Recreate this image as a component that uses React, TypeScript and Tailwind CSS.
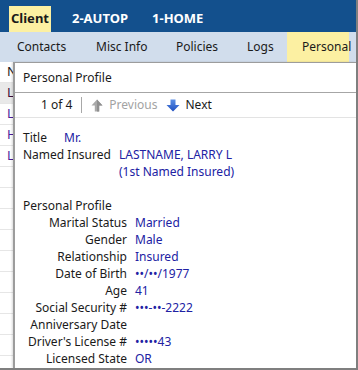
const ArrowUp = () => (
  <svg width="12" height="13" viewBox="0 0 12 13">
    <path d="M6 0.5 L11.5 6.5 H8.2 V12.5 H3.8 V6.5 H0.5 Z" fill="#a9a9a9" />
    <path d="M6 0.5 L11.5 6.5 H8.2 V12.5 H6 Z" fill="#8f8f8f" />
  </svg>
);

const ArrowDown = () => (
  <svg width="14" height="13" viewBox="0 0 14 13">
    <defs>
      <linearGradient id="dn" x1="0" y1="0" x2="0" y2="1">
        <stop offset="0" stopColor="#5b8fe6" />
        <stop offset="1" stopColor="#1f4fc0" />
      </linearGradient>
    </defs>
    <path d="M4.5 0.5 H9.5 V6 H13.5 L7 12.5 L0.5 6 H4.5 Z" fill="url(#dn)" />
  </svg>
);

const fields: [string, string][] = [
  ['Marital Status', 'Married'],
  ['Gender', 'Male'],
  ['Relationship', 'Insured'],
  ['Date of Birth', '••/••/1977'],
  ['Age', '41'],
  ['Social Security #', '•••-••-2222'],
  ['Anniversary Date', ''],
  ["Driver's License #", '•••••43'],
  ['Licensed State', 'OR'],
];

const listRows = ['L', 'L', 'H', 'L', '', '', '', '', '', '', '', '', ''];

export default function App() {
  return (
    <div className="relative w-[358px] h-[370px] overflow-hidden bg-white border-r-2 border-b-2 border-[#7f7f7f] font-['Noto_Sans',sans-serif] text-[12px] text-[#1a1a1a]">
      {/* Top tab bar */}
      <div className="flex h-[32px] items-end bg-[#13508d] pl-[9px] font-bold text-[13px] text-white">
        <div className="flex h-[26px] w-[42px] items-center justify-center bg-[#fcf0a2] text-[#1a1a1a]">
          Client
        </div>
        <div className="flex h-[26px] items-center pl-[21px]">2-AUTOP</div>
        <div className="flex h-[26px] items-center pl-[24px]">1-HOME</div>
      </div>

      {/* Sub tabs */}
      <div className="flex h-[30px] bg-[#d1ddec] pl-[8px] text-[12px]">
        <div className="flex w-[80px] items-center pl-[9px]">Contacts</div>
        <div className="flex w-[80px] items-center pl-[8px]">Misc Info</div>
        <div className="flex w-[71px] items-center pl-[8px]">Policies</div>
        <div className="flex w-[48px] items-center pl-[8px]">Logs</div>
        <div className="flex w-[62px] items-center pl-[15px] bg-[#fcf0a2]">Personal</div>
      </div>

      {/* List behind the popup */}
      <div className="flex flex-col text-[13px]">
        <div className="flex h-[21px] items-center border-b border-[#e6e6e6] pl-[7px] text-[#1a1a1a]">N</div>
        {listRows.map((r, i) => (
          <div
            key={i}
            className={`flex h-[21px] items-center border-b border-[#e6e6e6] pl-[7px] ${
              i === 0 ? 'bg-[#e9e9e9] text-[#3a0a3a]' : 'text-[#4b1c9a]'
            }`}
          >
            {r}
          </div>
        ))}
      </div>

      {/* Personal Profile popup */}
      <div className="absolute left-[13px] top-[62px] right-0 bottom-0 flex flex-col border-l-2 border-t border-[#9c9c9c] bg-white shadow-[-1px_0_2px_rgba(0,0,0,0.15)]">
        <div className="flex h-[30px] items-center border-b border-[#a6a6a6] pl-[8px]">
          Personal Profile
        </div>
        <div className="flex h-[25px] items-center border-b border-[#e3e3e3]">
          <span className="pl-[26px] pr-[9px]">1 of 4</span>
          <div className="h-[16px] w-px bg-[#a8a8a8]" />
          <span className="ml-[9px] flex items-center">
            <ArrowUp />
          </span>
          <span className="ml-[6px] text-[#a3a3a3]">Previous</span>
          <span className="ml-[9px] flex items-center">
            <ArrowDown />
          </span>
          <span className="ml-[5px]">Next</span>
        </div>

        <div className="flex flex-col pl-[8px] pt-[11px] leading-[17px]">
          <div className="flex">
            <span className="w-[41px]">Title</span>
            <span className="text-[#2121a3]">Mr.</span>
          </div>
          <div className="flex">
            <span className="w-[96px]">Named Insured</span>
            <div className="flex flex-col text-[#2121a3]">
              <span>LASTNAME, LARRY L</span>
              <span>(1st Named Insured)</span>
            </div>
          </div>

          <div className="mt-[17px]">Personal Profile</div>
          <div className="grid grid-cols-[104px_1fr] gap-x-[8px]">
            {fields.map(([label, value]) => (
              <div key={label} className="contents">
                <span className="text-right whitespace-nowrap">{label}</span>
                <span className="h-[17px] text-[#2121a3]">{value}</span>
              </div>
            ))}
          </div>
        </div>
      </div>
    </div>
  );
}
